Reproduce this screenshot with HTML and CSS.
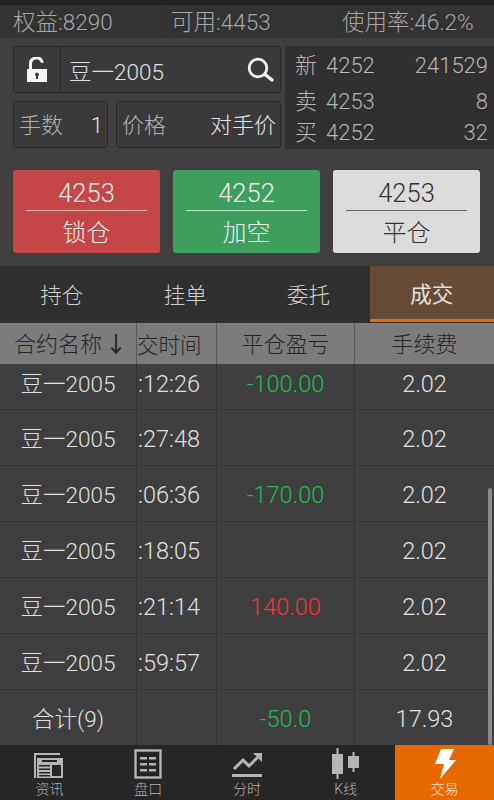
FILE: index.html
```html
<!DOCTYPE html>
<html lang="zh-CN">
<head>
    <meta charset="UTF-8">
    <meta name="viewport" content="width=device-width, initial-scale=1.0">
    <title>交易</title>
    <link rel="stylesheet" href="styles.css">
</head>
<body>
    <div class="app">
        <div class="stats">
            <div class="stat stat-a">权益:8290</div>
            <div class="stat stat-b">可用:4453</div>
            <div class="stat stat-c">使用率:46.2%</div>
        </div>

        <div class="panel">
            <div class="order-top">
                <div class="order-form">
                    <div class="box contract">
                        <div class="lock">
                            <svg width="20" height="25" viewBox="0 0 20 25">
                                <path d="M3.500 13V7a6 6 0 0 1 11.500-2.500" fill="none" stroke="#f4f4f4" stroke-width="3" stroke-linecap="round"/>
                                <path fill-rule="evenodd" fill="#f4f4f4" d="M0 12h20v13H0zM10 15.500a2 2 0 0 0-1 3.700V22h2v-2.800a2 2 0 0 0-1-3.700z"/>
                            </svg>
                        </div>
                        <div class="contract-name">豆一2005</div>
                        <svg class="search" width="28" height="26" viewBox="0 0 28 26">
                            <circle cx="11" cy="11" r="8.800" fill="none" stroke="#f4f4f4" stroke-width="2.800"/>
                            <path d="M18 17.500l7 5.500" stroke="#f4f4f4" stroke-width="3.400" stroke-linecap="round"/>
                        </svg>
                    </div>
                    <div class="form-row">
                        <div class="box field field-qty"><span>手数</span><span class="field-val">1</span></div>
                        <div class="box field field-price"><span>价格</span><span class="field-val">对手价</span></div>
                    </div>
                </div>
                <div class="quote">
                    <div class="quote-row row-new"><span class="q-label">新</span><span class="q-price">4252</span><span class="q-vol">241529</span></div>
                    <div class="quote-row"><span class="q-label">卖</span><span class="q-price">4253</span><span class="q-vol">8</span></div>
                    <div class="quote-row"><span class="q-label">买</span><span class="q-price">4252</span><span class="q-vol">32</span></div>
                </div>
            </div>
            <div class="actions">
                <div class="action red"><div class="action-price">4253</div><div class="action-name">锁仓</div></div>
                <div class="action green"><div class="action-price">4252</div><div class="action-name">加空</div></div>
                <div class="action light"><div class="action-price">4253</div><div class="action-name">平仓</div></div>
            </div>
        </div>

        <div class="tabs">
            <div class="tab">持仓</div>
            <div class="tab">挂单</div>
            <div class="tab">委托</div>
            <div class="tab active">成交</div>
        </div>

        <div class="table">
            <div class="row head">
                <div class="cell first-head">合约名称<b class="arrow">↓</b></div>
                <div class="cell clip">交时间</div>
                <div class="cell">平仓盈亏</div>
                <div class="cell">手续费</div>
            </div>
            <div class="row first">
                <div class="cell name">豆一2005</div><div class="cell clip">:12:26</div><div class="cell loss">-100.00</div><div class="cell">2.02</div>
            </div>
            <div class="row">
                <div class="cell name">豆一2005</div><div class="cell clip">:27:48</div><div class="cell"></div><div class="cell">2.02</div>
            </div>
            <div class="row">
                <div class="cell name">豆一2005</div><div class="cell clip">:06:36</div><div class="cell loss">-170.00</div><div class="cell">2.02</div>
            </div>
            <div class="row">
                <div class="cell name">豆一2005</div><div class="cell clip">:18:05</div><div class="cell"></div><div class="cell">2.02</div>
            </div>
            <div class="row">
                <div class="cell name">豆一2005</div><div class="cell clip">:21:14</div><div class="cell gain">140.00</div><div class="cell">2.02</div>
            </div>
            <div class="row">
                <div class="cell name">豆一2005</div><div class="cell clip">:59:57</div><div class="cell"></div><div class="cell">2.02</div>
            </div>
            <div class="row total">
                <div class="cell name">合计(9)</div><div class="cell clip"></div><div class="cell loss">-50.0</div><div class="cell">17.93</div>
            </div>
            <div class="scrollbar"></div>
        </div>

        <div class="nav">
            <div class="nav-item">
                <svg width="32" height="26" viewBox="0 0 32 26">
                    <path d="M27 1H2v24" fill="none" stroke="#b5b5b5" stroke-width="2"/>
                    <rect x="4" y="5" width="26" height="20" fill="#b5b5b5"/>
                    <path d="M9 7h15v2H9z" fill="#262626"/>
                    <path d="M6 12h11v1.500H6zM6 15.500h11V17H6zM6 19h11v1.500H6zM6 22h11v1.500H6z" fill="#262626"/>
                    <rect x="19" y="12" width="9" height="11" fill="#262626"/>
                </svg>
                <span>资讯</span>
            </div>
            <div class="nav-item">
                <svg width="28" height="30" viewBox="0 0 28 30">
                    <rect x="1.500" y="1.500" width="25" height="27" fill="none" stroke="#b5b5b5" stroke-width="2.400"/>
                    <path d="M6 8h7v2.500H6zM15 8h7v2.500h-7zM6 14h7v2.500H6zM15 14h7v2.500h-7zM6 20h7v2.500H6zM15 20h7v2.500h-7z" fill="#b5b5b5"/>
                </svg>
                <span>盘口</span>
            </div>
            <div class="nav-item">
                <svg width="32" height="28" viewBox="0 0 32 28">
                    <path d="M3 18l9-9 6 6 9-9" fill="none" stroke="#b5b5b5" stroke-width="3"/>
                    <path d="M22 2h9v9zM1 23h30v3H1z" fill="#b5b5b5"/>
                </svg>
                <span>分时</span>
            </div>
            <div class="nav-item">
                <svg width="28" height="31" viewBox="0 0 28 31">
                    <path d="M4.500 0h2v6H11v20H6.500v5h-2v-5H0V6h4.500zM20.500 4h2v4H27v12h-4.500v4h-2v-4H16V8h4.500z" fill="#b5b5b5"/>
                </svg>
                <span>K线</span>
            </div>
            <div class="nav-item active">
                <svg width="22" height="30" viewBox="0 0 22 30">
                    <path d="M7 0h13l-5 11h7L6 30l4-15H1z" fill="#fff"/>
                </svg>
                <span>交易</span>
            </div>
        </div>
    </div>
</body>
</html>
```

FILE: styles.css
```css
* {
    box-sizing: border-box;
}
body {
    margin: 0;
    background: #3f3f3f;
    font-family: Roboto, "Noto Sans CJK SC", sans-serif;
    font-weight: 300;
    line-height: 1.2;
    color: #c8c8c8;
}
.app {
    width: 494px;
    height: 800px;
    overflow: hidden;
    display: flex;
    flex-direction: column;
}

/* top stats */
.stats {
    height: 38px;
    display: flex;
    border-top: 5px solid #222;
    background: #333;
    font-size: 22.500px;
    color: #a6a6a6;
}
.stat {
    display: flex;
    align-items: center;
    padding-top: 2px;
}
.stat-a {
    width: 167px;
    padding-left: 13px;
    border-right: 1px solid #2d2d2d;
}
.stat-b {
    width: 172px;
    padding-left: 4px;
    border-right: 1px solid #2d2d2d;
}
.stat-c {
    flex: 1;
    padding-left: 3px;
}

/* order panel */
.panel {
    height: 228px;
    background: #3f3f3f;
    padding: 8px 0 0 13px;
}
.order-top {
    display: flex;
    height: 103px;
}
.order-form {
    width: 268px;
    display: flex;
    flex-direction: column;
    gap: 8px;
}
.box {
    background: #3a3a3a;
    border: 1px solid #262626;
    border-radius: 3px;
    height: 47px;
}
.contract {
    display: flex;
    align-items: center;
}
.lock {
    width: 47px;
    height: 100%;
    border-right: 1px solid #262626;
    display: flex;
    align-items: center;
    justify-content: center;
}
.contract-name {
    flex: 1;
    padding: 5px 0 0 8px;
    font-size: 22.500px;
    color: #e0e0e0;
}
.search {
    margin-right: 5px;
}
.form-row {
    display: flex;
    gap: 8px;
}
.field {
    display: flex;
    align-items: center;
    justify-content: space-between;
    padding: 3px 4px 0 5px;
    font-size: 22px;
    color: #b0b0b0;
}
.field-qty {
    width: 95px;
}
.field-price {
    flex: 1;
}
.field-val {
    color: #e4e4e4;
}
.quote {
    width: 209px;
    margin-left: 4px;
    background: #303030;
    padding: 5px 6px 0 10px;
    font-size: 22px;
    color: #b4b4b4;
}
.quote-row {
    display: flex;
    align-items: center;
    height: 31px;
}
.row-new {
    margin-bottom: 5px;
}
.q-label {
    width: 31px;
}
.q-price {
    flex: 1;
}

.actions {
    display: flex;
    gap: 13px;
    margin-top: 21px;
}
.action {
    width: 147px;
    height: 83px;
    border-radius: 3px;
    padding: 0 13px;
    text-align: center;
    color: #eee;
}
.action-price {
    height: 41px;
    line-height: 47px;
    font-size: 25.500px;
    border-bottom: 1px solid #e0b8b8;
}
.action-name {
    line-height: 45px;
    font-size: 24px;
}
.red {
    background: #c44646;
}
.green {
    background: #3e9e5e;
}
.green .action-price {
    border-bottom-color: #b8dcc4;
}
.light {
    background: #dcdcdc;
    color: #333;
}
.light .action-price {
    border-bottom-color: #666;
}

/* tabs */
.tabs {
    height: 56px;
    display: flex;
    background: #2f2f2f;
}
.tab {
    width: 123.500px;
    display: flex;
    align-items: center;
    justify-content: center;
    padding-top: 4px;
    font-size: 21.500px;
    color: #d0d0d0;
}
.tab:nth-child(3) {
    width: 123px;
}
.tab.active {
    background: #664c38;
    border-bottom: 3px solid #e86a00;
    color: #e0e0e0;
    font-weight: 400;
    padding-top: 5px;
}

/* table */
.table {
    position: relative;
    height: 423px;
    background: #3f3f3f;
    border-top: 1px solid #333;
}
.row {
    display: grid;
    grid-template-columns: 137px 80px 138px 1fr;
    height: 56px;
    border-bottom: 1px solid #333;
}
.row.head {
    height: 41px;
    background: #7c7c7c;
    color: #262626;
    border-bottom: none;
}
.row.head .cell {
    font-size: 22px;
    border-right-color: #5a5a5a;
    padding-top: 4px;
}
.row.head .clip {
    font-size: 21.500px;
    padding-left: 0;
}
.row.head .first-head {
    padding-left: 5px;
}
.row.first {
    height: 46px;
}
.row.first .cell {
    padding-bottom: 8px;
}
.row.total {
    height: 55px;
    border-bottom: none;
}
.cell {
    display: flex;
    align-items: center;
    justify-content: center;
    border-right: 1px solid #333;
    padding-top: 3px;
    font-size: 23.500px;
    color: inherit;
    white-space: nowrap;
}
.row:not(.head) {
    color: #e0e0e0;
}
.cell.name {
    font-size: 22.500px;
}
.cell:last-child {
    border-right: none;
}
.clip {
    justify-content: flex-start;
    padding-left: 1px;
}
.loss {
    color: #1fbb58;
}
.gain {
    color: #f0363f;
}
.arrow {
    font-weight: 500;
    margin-left: 3px;
}
.scrollbar {
    position: absolute;
    right: 2px;
    top: 165px;
    width: 4px;
    height: 257px;
    border-radius: 2px;
    background: #8a8a8a;
}

/* bottom nav */
.nav {
    height: 55px;
    display: flex;
    background: #262626;
}
.nav-item {
    width: 98.800px;
    display: flex;
    flex-direction: column;
    align-items: center;
    justify-content: flex-end;
    font-size: 14px;
    line-height: 18px;
    color: #b0b0b0;
    gap: 1px;
    padding-bottom: 2px;
}
.nav-item.active {
    background: #e86800;
    color: #f4e4d4;
}
```
